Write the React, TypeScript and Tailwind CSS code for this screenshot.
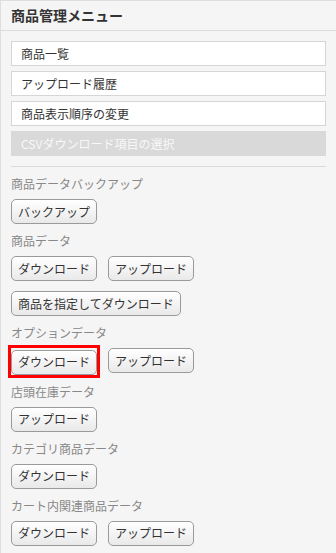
const FONT = { fontFamily: '"Noto Sans CJK JP", "Noto Sans", sans-serif' }

const MENU = ['商品一覧', 'アップロード履歴', '商品表示順序の変更']

type Section = { label: string; rows: { text: string; marked?: boolean }[][] }

const SECTIONS: Section[] = [
  { label: '商品データバックアップ', rows: [[{ text: 'バックアップ' }]] },
  {
    label: '商品データ',
    rows: [[{ text: 'ダウンロード' }, { text: 'アップロード' }], [{ text: '商品を指定してダウンロード' }]],
  },
  { label: 'オプションデータ', rows: [[{ text: 'ダウンロード', marked: true }, { text: 'アップロード' }]] },
  { label: '店頭在庫データ', rows: [[{ text: 'アップロード' }]] },
  { label: 'カテゴリ商品データ', rows: [[{ text: 'ダウンロード' }]] },
  { label: 'カート内関連商品データ', rows: [[{ text: 'ダウンロード' }, { text: 'アップロード' }]] },
]

function Btn({ text, marked }: { text: string; marked?: boolean }) {
  const btn = (
    <button className="h-[25px] rounded-[5px] border border-[#9a9a9a] bg-gradient-to-b from-white to-[#e9e9e9] px-[6px] text-[12px] leading-none text-[#333]">
      {text}
    </button>
  )
  if (!marked) return btn
  // 赤枠: 注目ボタン
  return <div className="-m-[3px] border-[3px] border-[#ff0000]">{btn}</div>
}

export default function App() {
  return (
    <div className="min-h-[553px] w-[336px] border-t border-l border-[#dedede] bg-[#f5f5f5]" style={FONT}>
      <div className="flex h-[30px] items-center border-b border-[#dcdcdc] px-[10px] text-[14px] font-bold text-[#333]">
        商品管理メニュー
      </div>

      <div className="px-[10px] pt-[10px]">
        <ul className="flex flex-col gap-[5px]">
          {MENU.map((m) => (
            <li
              key={m}
              className="flex h-[25px] items-center border border-[#d6d6d6] bg-white pl-[9px] text-[12px] text-[#333]"
            >
              {m}
            </li>
          ))}
          <li className="flex h-[25px] items-center bg-[#d9d9d9] pl-[10px] text-[12px] text-[#f8f8f8]">
            CSVダウンロード項目の選択
          </li>
        </ul>

        <hr className="mt-[10px] border-t border-[#dadada]" />

        <div className="mt-[8px] flex flex-col gap-[8px]">
          {SECTIONS.map((s) => (
            <section key={s.label}>
              <div className="mb-[6px] h-[18px] text-[12px] leading-[18px] text-[#888]">{s.label}</div>
              <div className="flex flex-col gap-[10px]">
                {s.rows.map((row, i) => (
                  <div key={i} className="flex gap-[11px]">
                    {row.map((b, j) => (
                      <Btn key={j} text={b.text} marked={b.marked} />
                    ))}
                  </div>
                ))}
              </div>
            </section>
          ))}
        </div>
      </div>
    </div>
  )
}
